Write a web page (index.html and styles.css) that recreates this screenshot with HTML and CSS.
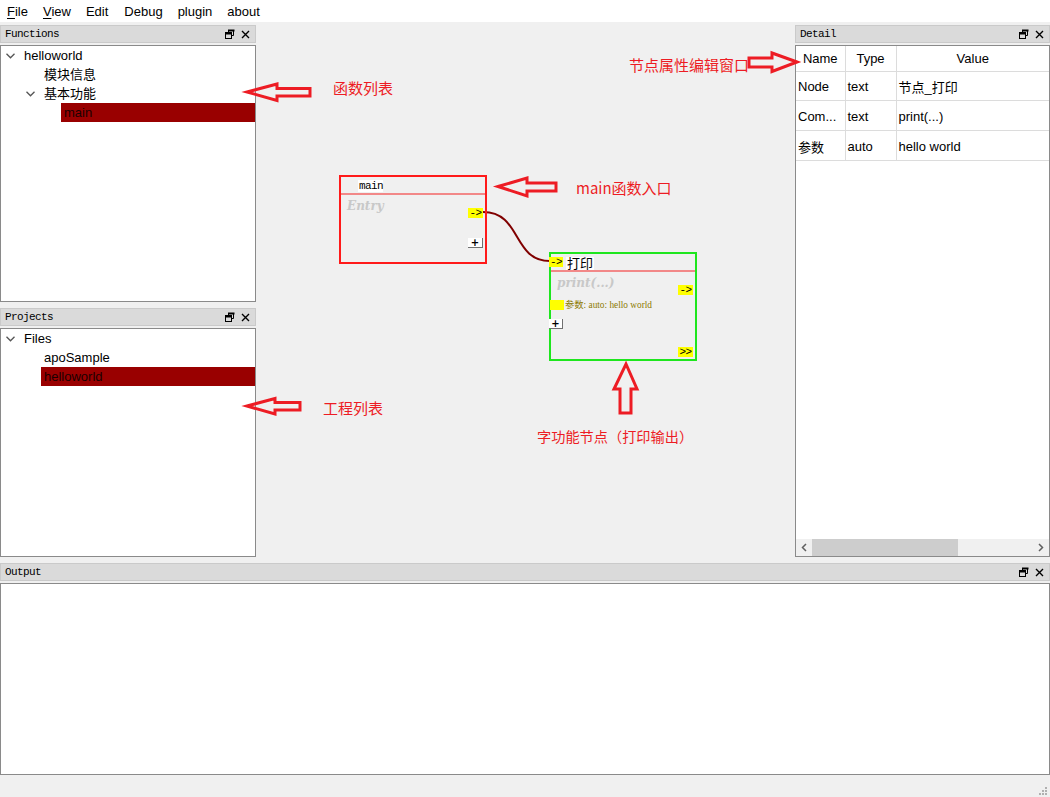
FILE: index.html
```html
<!DOCTYPE html>
<html>
<head>
<meta charset="utf-8">
<link rel="stylesheet" href="styles.css">
</head>
<body>
<div class="menubar">
  <span class="menu-item"><u>F</u>ile</span>
  <span class="menu-item"><u>V</u>iew</span>
  <span class="menu-item">Edit</span>
  <span class="menu-item">Debug</span>
  <span class="menu-item">plugin</span>
  <span class="menu-item">about</span>
</div>

<div class="main">
  <div class="col-left">
    <section class="dock dock-functions">
      <div class="dock-title"><span>Functions</span>
        <span class="dock-btns">
          <svg class="ico-float" width="10" height="10" viewBox="0 0 10 10"><path d="M3.5 1.5h5v5h-1.5M3.5 1.5v2" fill="none" stroke="#000" stroke-width="1"/><rect x="3" y="0.5" width="6.5" height="2" fill="#000"/><rect x="0.5" y="3.5" width="6" height="6" fill="#dadada" stroke="#000" stroke-width="1"/><rect x="0.5" y="3.5" width="6" height="2" fill="#000"/></svg>
          <svg class="ico-close" width="9" height="9" viewBox="0 0 9 9"><path d="M1 1L8 8M8 1L1 8" stroke="#000" stroke-width="1.4"/></svg>
        </span>
      </div>
      <div class="dock-body tree">
        <div class="tree-row lvl0"><span class="twisty"><svg width="9" height="6" viewBox="0 0 9 6"><path d="M0.5 0.8L4.5 4.8L8.5 0.8" fill="none" stroke="#555" stroke-width="1.3"/></svg></span><span class="label">helloworld</span></div>
        <div class="tree-row lvl1"><span class="twisty"></span><span class="label">模块信息</span></div>
        <div class="tree-row lvl1"><span class="twisty"><svg width="9" height="6" viewBox="0 0 9 6"><path d="M0.5 0.8L4.5 4.8L8.5 0.8" fill="none" stroke="#555" stroke-width="1.3"/></svg></span><span class="label">基本功能</span></div>
        <div class="tree-row lvl2"><span class="twisty"></span><span class="label selected">main</span></div>
      </div>
    </section>
    <section class="dock dock-projects">
      <div class="dock-title"><span>Projects</span>
        <span class="dock-btns">
          <svg class="ico-float" width="10" height="10" viewBox="0 0 10 10"><path d="M3.5 1.5h5v5h-1.5M3.5 1.5v2" fill="none" stroke="#000" stroke-width="1"/><rect x="3" y="0.5" width="6.5" height="2" fill="#000"/><rect x="0.5" y="3.5" width="6" height="6" fill="#dadada" stroke="#000" stroke-width="1"/><rect x="0.5" y="3.5" width="6" height="2" fill="#000"/></svg>
          <svg class="ico-close" width="9" height="9" viewBox="0 0 9 9"><path d="M1 1L8 8M8 1L1 8" stroke="#000" stroke-width="1.4"/></svg>
        </span>
      </div>
      <div class="dock-body tree">
        <div class="tree-row lvl0"><span class="twisty"><svg width="9" height="6" viewBox="0 0 9 6"><path d="M0.5 0.8L4.5 4.8L8.5 0.8" fill="none" stroke="#555" stroke-width="1.3"/></svg></span><span class="label">Files</span></div>
        <div class="tree-row lvl1"><span class="twisty"></span><span class="label">apoSample</span></div>
        <div class="tree-row lvl1"><span class="twisty"></span><span class="label selected">helloworld</span></div>
      </div>
    </section>
  </div>

  <div class="canvas">
    <svg class="links" width="539" height="538" viewBox="256 22 539 538">
      <path d="M483 212 C522 212 512 261 550 261" fill="none" stroke="#800000" stroke-width="2"/>
    </svg>

    <div class="node node-main">
      <span class="node-title mono">main</span>
      <div class="node-sep"></div>
      <span class="node-desc">Entry</span>
      <span class="pin pin-out1 mono">-&gt;</span>
      <span class="plus plus-main">+</span>
    </div>

    <div class="node node-print">
      <span class="pin pin-in mono">-&gt;</span>
      <span class="node-title cjk-title">打印</span>
      <div class="node-sep"></div>
      <span class="node-desc">print(...)</span>
      <span class="pin pin-out2 mono">-&gt;</span>
      <span class="param-pin"></span>
      <span class="param-text">参数: auto: hello world</span>
      <span class="plus plus-print">+</span>
      <span class="pin pin-next mono">&gt;&gt;</span>
    </div>
  </div>

  <div class="col-right">
    <section class="dock dock-detail">
      <div class="dock-title"><span>Detail</span>
        <span class="dock-btns">
          <svg class="ico-float" width="10" height="10" viewBox="0 0 10 10"><path d="M3.5 1.5h5v5h-1.5M3.5 1.5v2" fill="none" stroke="#000" stroke-width="1"/><rect x="3" y="0.5" width="6.5" height="2" fill="#000"/><rect x="0.5" y="3.5" width="6" height="6" fill="#dadada" stroke="#000" stroke-width="1"/><rect x="0.5" y="3.5" width="6" height="2" fill="#000"/></svg>
          <svg class="ico-close" width="9" height="9" viewBox="0 0 9 9"><path d="M1 1L8 8M8 1L1 8" stroke="#000" stroke-width="1.4"/></svg>
        </span>
      </div>
      <div class="dock-body detail-body">
        <table class="props">
          <thead>
            <tr><th class="c1">Name</th><th class="c2">Type</th><th class="c3">Value</th></tr>
          </thead>
          <tbody>
            <tr><td>Node</td><td>text</td><td>节点_打印</td></tr>
            <tr><td>Com...</td><td>text</td><td>print(...)</td></tr>
            <tr><td>参数</td><td>auto</td><td>hello world</td></tr>
          </tbody>
        </table>
        <div class="hscroll">
          <span class="sb-arrow"><svg width="6" height="9" viewBox="0 0 6 9"><path d="M5 1L1.5 4.5L5 8" fill="none" stroke="#606060" stroke-width="1.5"/></svg></span>
          <span class="sb-track"><span class="sb-thumb"></span></span>
          <span class="sb-arrow"><svg width="6" height="9" viewBox="0 0 6 9"><path d="M1 1L4.5 4.5L1 8" fill="none" stroke="#606060" stroke-width="1.5"/></svg></span>
        </div>
      </div>
    </section>
  </div>
</div>

<section class="dock dock-output">
  <div class="dock-title"><span>Output</span>
    <span class="dock-btns">
      <svg class="ico-float" width="10" height="10" viewBox="0 0 10 10"><path d="M3.5 1.5h5v5h-1.5M3.5 1.5v2" fill="none" stroke="#000" stroke-width="1"/><rect x="3" y="0.5" width="6.5" height="2" fill="#000"/><rect x="0.5" y="3.5" width="6" height="6" fill="#dadada" stroke="#000" stroke-width="1"/><rect x="0.5" y="3.5" width="6" height="2" fill="#000"/></svg>
      <svg class="ico-close" width="9" height="9" viewBox="0 0 9 9"><path d="M1 1L8 8M8 1L1 8" stroke="#000" stroke-width="1.4"/></svg>
    </span>
  </div>
  <div class="dock-body"></div>
</section>

<div class="statusbar">
  <svg class="grip" width="10" height="10" viewBox="0 0 10 10">
    <rect x="7" y="1" width="2" height="2" fill="#b0b0b0"/>
    <rect x="4" y="4" width="2" height="2" fill="#b0b0b0"/><rect x="7" y="4" width="2" height="2" fill="#b0b0b0"/>
    <rect x="1" y="7" width="2" height="2" fill="#b0b0b0"/><rect x="4" y="7" width="2" height="2" fill="#b0b0b0"/><rect x="7" y="7" width="2" height="2" fill="#b0b0b0"/>
  </svg>
</div>

<svg class="annot-arrows" width="1050" height="797" viewBox="0 0 1050 797">
  <g fill="none" stroke="#ed1c24" stroke-width="3" stroke-linejoin="miter">
    <path d="M247 92 L277 84 L277 88.5 L310 88.5 L310 96 L277 96 L277 100.5 Z"/>
    <path d="M498 186.5 L527 178 L527 183 L556 183 L556 191 L527 191 L527 196 Z"/>
    <path d="M797 62 L772 53 L772 58 L749 58 L749 67 L772 67 L772 71.5 Z"/>
    <path d="M626 364 L637 389 L631 389 L631 413 L620 413 L620 389 L614 389 Z"/>
    <path d="M247 406 L275 398.5 L275 402.5 L300 402.5 L300 410 L275 410 L275 414 Z"/>
  </g>
</svg>
<div class="annot annot-func">函数列表</div>
<div class="annot annot-main">main函数入口</div>
<div class="annot annot-detail">节点属性编辑窗口</div>
<div class="annot annot-node">字功能节点（打印输出）</div>
<div class="annot annot-proj">工程列表</div>
</body>
</html>
```

FILE: styles.css
```css
* { box-sizing: border-box; }
html, body { margin: 0; padding: 0; }
body {
  width: 1050px;
  height: 797px;
  overflow: hidden;
  position: relative;
  background: #f0f0f0;
  font-family: "Liberation Sans", "Noto Sans CJK SC", sans-serif;
  font-size: 13px;
  color: #000;
}

/* menu */
.menubar {
  height: 22px;
  background: #fff;
  display: flex;
  align-items: center;
  gap: 15px;
  padding-left: 7px;
}
.menu-item u { text-decoration: underline; text-underline-offset: 2px; }
.menu-item:nth-child(4) { margin-left: 1px; }

/* layout */
.main { display: flex; height: 538px; }
.col-left { width: 256px; display: flex; flex-direction: column; }
.canvas { flex: 1; position: relative; }
.col-right { width: 255px; display: flex; flex-direction: column; }

/* docks */
.dock { display: flex; flex-direction: column; }
.dock-functions { height: 280px; padding-top: 3px; }
.dock-projects { flex: 1; padding: 6px 0 3px; }
.dock-detail { flex: 1; padding: 3px 0; }
.dock-output { height: 215px; padding-top: 3px; }

.dock-title {
  height: 18px;
  flex: none;
  background: #dadada;
  border: 1px solid #cacaca;
  display: flex;
  align-items: center;
  padding: 0 4px 0 4px;
  font-family: "Liberation Mono", "DejaVu Sans Mono", monospace;
  font-size: 11px;
  letter-spacing: -0.6px;
}
.dock-btns { margin-left: auto; display: flex; align-items: center; gap: 6px; padding-right: 1px; }
.dock-btns svg { display: block; }

.dock-body {
  flex: 1;
  margin-top: 2px;
  background: #fff;
  border: 1px solid #8a8a8a;
}

/* tree */
.tree-row { display: flex; height: 19px; line-height: 19px; }
.lvl1 { padding-left: 20px; }
.lvl2 { padding-left: 40px; }
.twisty { width: 20px; flex: none; display: flex; align-items: center; padding-left: 5px; }
.twisty svg { display: block; }
.label { flex: 1; padding-left: 3px; white-space: nowrap; }
.label.selected { background: #990000; color: #1a0000; }

/* canvas */
.links { position: absolute; left: 0; top: 0; }
.node {
  position: absolute;
  width: 148px;
  border: 2px solid #ff1a1a;
}
.node-main { left: 83px; top: 153px; height: 89px; }
.node-print { left: 293px; top: 230px; height: 109px; border-color: #1ee61e; }

.mono { font-family: "Liberation Mono", "DejaVu Sans Mono", monospace; font-size: 11px; letter-spacing: -0.6px; }

.node-title {
  position: absolute;
  background: #fff;
  line-height: 12px;
  height: 12px;
}
.node-main .node-title { left: 17px; top: 3px; width: 25px; padding-left: 1px; }
.node-print .node-title.cjk-title { left: 15px; top: 3px; font-size: 13px; line-height: 14px; height: 14px; padding: 0 1px; }

.node-sep {
  position: absolute;
  left: 0; right: 0;
  height: 2px;
  background: #f28888;
}
.node-main .node-sep { top: 16px; }
.node-print .node-sep { top: 16px; }

.node-desc {
  position: absolute;
  font-family: "DejaVu Serif", "Liberation Serif", serif;
  font-style: italic;
  font-weight: bold;
  font-size: 12px;
  color: #c8c8c8;
  line-height: 14px;
}
.node-main .node-desc { left: 6px; top: 22px; }
.node-print .node-desc { left: 6px; top: 22px; }

.pin {
  position: absolute;
  width: 15px;
  height: 10px;
  background: #ffff00;
  color: #000;
  line-height: 10px;
  text-align: center;
  font-size: 11px;
}
.pin-out1 { left: 127px; top: 31px; }
.pin-in { left: -2px; top: 3px; width: 14px; }
.pin-out2 { left: 127px; top: 31px; }
.pin-next { left: 127px; top: 93px; }

.param-pin { position: absolute; left: -1px; top: 46px; width: 14px; height: 10px; background: #ffff00; }
.param-text {
  position: absolute;
  left: 14px; top: 45px;
  font-family: "Liberation Serif", "Noto Sans CJK SC", serif;
  font-size: 9.3px;
  line-height: 12px;
  color: #8c7a00;
  white-space: nowrap;
}

.plus {
  position: absolute;
  width: 15px;
  height: 10px;
  background: #fff;
  border-right: 1px solid #707070;
  border-bottom: 1px solid #707070;
  font-family: "DejaVu Sans", sans-serif;
  font-weight: bold;
  font-size: 10px;
  line-height: 9px;
  text-align: center;
}
.plus-main { left: 127px; top: 61px; }
.plus-print { left: -2px; top: 65px; width: 14px; }

/* detail */
.detail-body { display: flex; flex-direction: column; justify-content: space-between; }
.props {
  border-collapse: collapse;
  width: 100%;
  table-layout: fixed;
  font-size: 13px;
}
.props th { font-weight: normal; height: 25px; text-align: center; padding: 0; border-right: 1px solid #dcdcdc; }
.props th.c1 { width: 49px; }
.props th.c2 { width: 51px; }
.props th:last-child, .props td:last-child { border-right: none; }
.props td {
  height: 30px;
  padding: 2px 0 0 2px;
  border-right: 1px solid #dcdcdc;
  border-top: 1px solid #dcdcdc;
  border-bottom: 1px solid #dcdcdc;
  white-space: nowrap;
  overflow: hidden;
}
.props tbody tr:first-child td { height: 29px; }
.hscroll {
  height: 17px;
  display: flex;
  align-items: stretch;
  background: #f0f0f0;
}
.sb-arrow { width: 16px; display: flex; align-items: center; justify-content: center; flex: none; }
.sb-track { flex: 1; display: flex; align-items: stretch; }
.sb-thumb { width: 146px; background: #cdcdcd; }

/* status */
.statusbar { height: 22px; display: flex; justify-content: flex-end; align-items: flex-end; padding: 0 2px 1px 0; }
.grip { display: block; }

/* annotations */
.annot-arrows { position: absolute; left: 0; top: 0; pointer-events: none; }
.annot {
  position: absolute;
  color: #ed1c24;
  font-family: "Noto Sans CJK SC", sans-serif;
  font-size: 15px;
  line-height: 18px;
  white-space: nowrap;
}
.annot-func { left: 333px; top: 79px; }
.annot-main { left: 576px; top: 179px; }
.annot-detail { left: 629px; top: 56px; }
.annot-node { left: 537px; top: 427px; font-size: 14.2px; }
.annot-proj { left: 323px; top: 399px; }
```
